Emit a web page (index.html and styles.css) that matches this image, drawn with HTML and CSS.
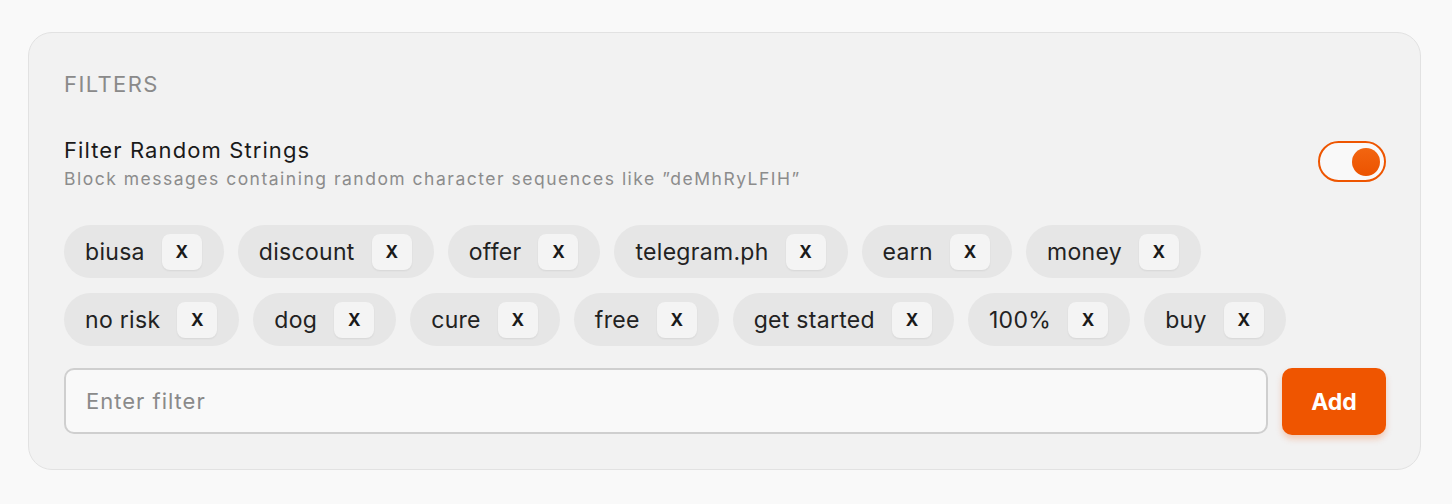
FILE: index.html
```html
<!DOCTYPE html>
<html lang="en">
<head>
<meta charset="utf-8">
<title>Filters</title>
<link rel="stylesheet" href="styles.css">
</head>
<body>
<div class="page">
  <section class="card">
    <h2 class="section-label">FILTERS</h2>
    <div class="setting">
      <div class="setting-text">
        <div class="setting-title">Filter Random Strings</div>
        <div class="setting-desc">Block messages containing random character sequences like ”deMhRyLFIH”</div>
      </div>
      <button class="toggle" aria-pressed="true"><span class="knob"></span></button>
    </div>
    <div class="chips">
      <span class="chip"><span class="chip-text">biusa</span><span class="chip-x">X</span></span>
      <span class="chip"><span class="chip-text">discount</span><span class="chip-x">X</span></span>
      <span class="chip"><span class="chip-text">offer</span><span class="chip-x">X</span></span>
      <span class="chip"><span class="chip-text">telegram.ph</span><span class="chip-x">X</span></span>
      <span class="chip"><span class="chip-text">earn</span><span class="chip-x">X</span></span>
      <span class="chip"><span class="chip-text">money</span><span class="chip-x">X</span></span>
      <span class="chip"><span class="chip-text">no risk</span><span class="chip-x">X</span></span>
      <span class="chip"><span class="chip-text">dog</span><span class="chip-x">X</span></span>
      <span class="chip"><span class="chip-text">cure</span><span class="chip-x">X</span></span>
      <span class="chip"><span class="chip-text">free</span><span class="chip-x">X</span></span>
      <span class="chip"><span class="chip-text">get started</span><span class="chip-x">X</span></span>
      <span class="chip"><span class="chip-text">100%</span><span class="chip-x">X</span></span>
      <span class="chip"><span class="chip-text">buy</span><span class="chip-x">X</span></span>
    </div>
    <div class="add-row">
      <input class="filter-input" type="text" placeholder="Enter filter">
      <button class="add-btn">Add</button>
    </div>
  </section>
</div>
</body>
</html>
```

FILE: styles.css
```css
* { box-sizing: border-box; }
html, body { margin: 0; padding: 0; }
body {
  background: #f9f9f9;
  font-family: Inter, "Noto Sans", sans-serif;
  color: #1a1a1a;
}
.page {
  padding: 32px 31px 34px 28px;
}
.card {
  background: #f2f2f2;
  border: 1px solid #e2e2e2;
  border-radius: 24px;
  padding: 38px 34px 34px 35px;
}
.section-label {
  margin: 0;
  font-size: 22px;
  line-height: 26px;
  font-weight: 400;
  letter-spacing: 1.4px;
  color: #8a8a8a;
}
.setting {
  display: flex;
  align-items: flex-start;
  justify-content: space-between;
  margin-top: 39px;
}
.setting-title {
  font-size: 22px;
  line-height: 28px;
  letter-spacing: 1.1px;
  color: #1a1a1a;
}
.setting-desc {
  font-size: 17.5px;
  line-height: 30px;
  letter-spacing: 1.5px;
  color: #8c8c8c;
  margin-top: 0;
}
.toggle {
  width: 68px;
  height: 41px;
  border: 2px solid #ee5500;
  border-radius: 999px;
  background: #f9f9f9;
  padding: 0 4px;
  display: flex;
  align-items: center;
  justify-content: flex-end;
  margin-top: 5px;
}
.knob {
  width: 28px;
  height: 28px;
  border-radius: 50%;
  background: linear-gradient(#f26510, #ec5300);
}
.chips {
  display: flex;
  flex-wrap: wrap;
  column-gap: 14px;
  row-gap: 15px;
  margin-top: 31px;
}
.chip {
  display: flex;
  align-items: center;
  height: 53px;
  padding: 0 22px 0 21px;
  gap: 17px;
  background: #e6e6e6;
  border-radius: 999px;
}
.chip-text {
  font-size: 23px;
  letter-spacing: 0.3px;
  color: #222;
}
.chip-x {
  width: 40px;
  height: 36px;
  border-radius: 8px;
  background: #f4f4f4;
  box-shadow: 0 1px 2px rgba(0,0,0,0.07);
  display: flex;
  align-items: center;
  justify-content: center;
  font-size: 17px;
  font-weight: 700;
  color: #1a1a1a;
}
.add-row {
  display: flex;
  gap: 14px;
  margin-top: 22px;
}
.filter-input {
  flex: 1;
  height: 66px;
  border: 2px solid #cfcfcf;
  border-radius: 10px;
  background: #f9f9f9;
  padding: 0 20px;
  font-family: Inter, "Noto Sans", sans-serif;
  font-size: 22px;
  letter-spacing: 1px;
  color: #1a1a1a;
  outline: none;
}
.filter-input::placeholder {
  color: #8a8a8a;
}
.add-btn {
  width: 104px;
  height: 67px;
  border: none;
  border-radius: 10px;
  background: #ef5500;
  color: #fff;
  font-family: Inter, "Noto Sans", sans-serif;
  font-size: 23px;
  font-weight: 700;
  box-shadow: 0 4px 6px rgba(239, 85, 0, 0.25);
}
```
